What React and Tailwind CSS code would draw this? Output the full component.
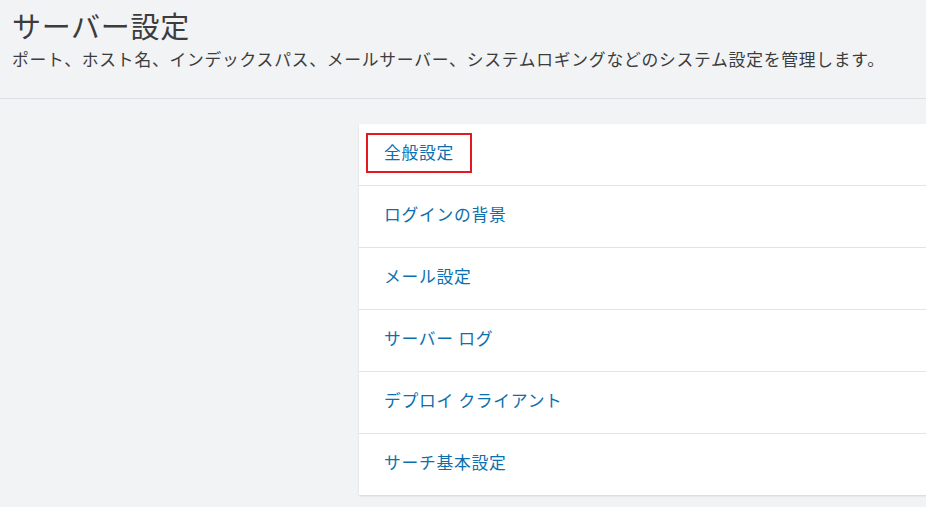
import React from 'react';

const SettingsPage = () => {
  // Settings sections
  const sections = [
    { id: 'general', label: '全般設定' },
    { id: 'login-bg', label: 'ログインの背景' },
    { id: 'mail', label: 'メール設定' },
    { id: 'server-log', label: 'サーバー ログ' },
    { id: 'deploy', label: 'デプロイ クライアント' },
    { id: 'search', label: 'サーチ基本設定' },
  ];
  const selected = 'general';

  return (
    <div className="min-h-[507px] w-full overflow-hidden bg-[#f2f3f5] font-['Noto_Sans_CJK_JP','Noto_Sans',sans-serif]">
      {/* Header */}
      <div className="border-b border-[#dcdee2] px-3 pt-[3px] pb-[27px]">
        <h1 className="text-[29px] leading-[44px] tracking-[0.7px] text-[#3c3c3c] font-normal">サーバー設定</h1>
        <p className="text-[16.8px] leading-[24px] tracking-[0.75px] text-[#3c3c3c] whitespace-nowrap">
          ポート、ホスト名、インデックスパス、メールサーバー、システムロギングなどのシステム設定を管理します。
        </p>
      </div>

      {/* Sections list */}
      <div className="pt-[25px] pl-[359px]">
        <div className="w-[600px] bg-white shadow-[0_1px_2px_rgba(0,0,0,0.12)]">
          {sections.map((s, i) => (
            <div
              key={s.id}
              className={`flex items-start pl-[7px] pt-[9px] ${i < sections.length - 1 ? 'h-[62px] border-b border-[#e1e3e6]' : 'h-[61px]'}`}
            >
              <a
                href="#"
                className={`inline-flex h-[40px] items-center border-2 px-4 text-[16.8px] tracking-[0.7px] text-[#0b6fb0] ${s.id === selected ? 'border-[#e3191f]' : 'border-transparent'}`}
              >
                {s.label}
              </a>
            </div>
          ))}
        </div>
      </div>
    </div>
  );
};

export default function App() {
  return <SettingsPage />;
}
